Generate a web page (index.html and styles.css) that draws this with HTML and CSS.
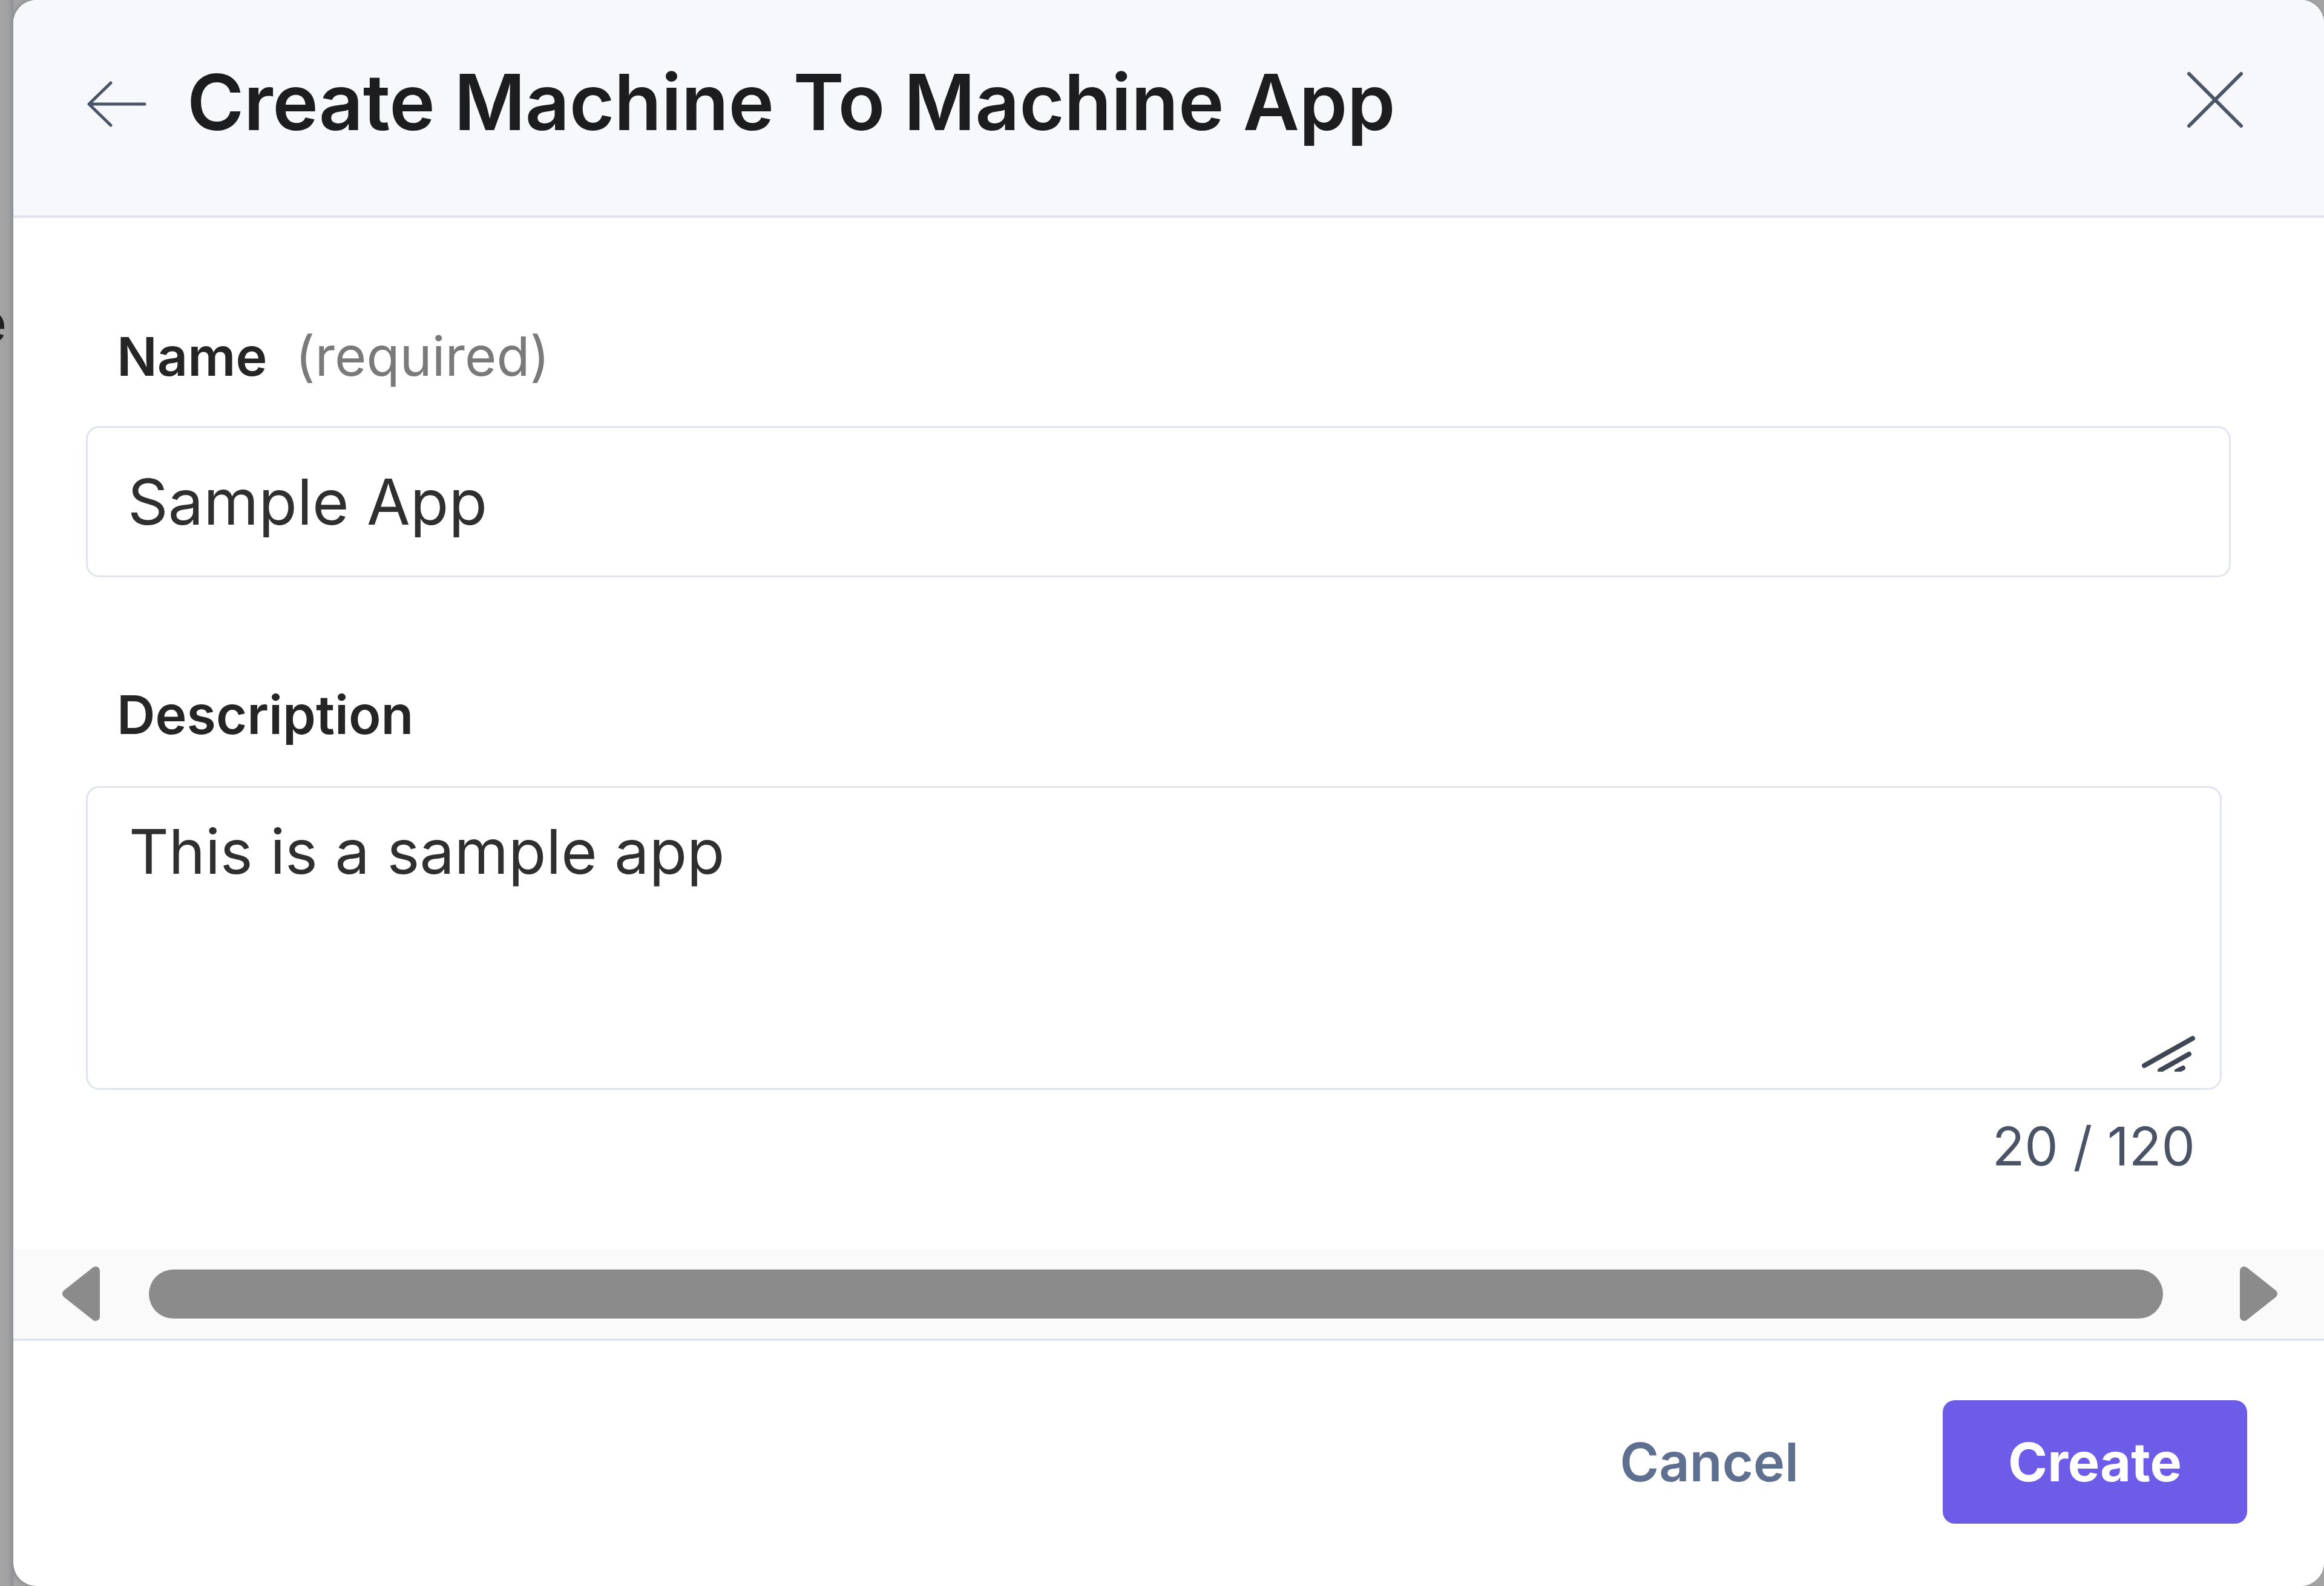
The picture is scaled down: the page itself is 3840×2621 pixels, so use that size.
FILE: index.html
```html
<!DOCTYPE html>
<html lang="en">
<head>
<meta charset="utf-8">
<title>Create Machine To Machine App</title>
<link rel="stylesheet" href="styles.css">
</head>
<body>
<div class="backdrop">
  <div class="strip"><span class="strip-e">e</span></div>
  <div class="dialog">
    <header class="dlg-header">
      <button class="icon-btn back" aria-label="Back">
        <svg viewBox="0 0 100 76" width="100" height="76"><path d="M97 38H5M41 3L5 38L41 73" fill="none" stroke="#4a5568" stroke-width="5" stroke-linecap="round" stroke-linejoin="round"/></svg>
      </button>
      <h1 class="title">Create Machine To Machine App</h1>
      <button class="icon-btn close" aria-label="Close">
        <svg viewBox="0 0 96 96" width="96" height="96"><path d="M5 5L91 91M91 5L5 91" fill="none" stroke="#4a5568" stroke-width="6" stroke-linecap="round"/></svg>
      </button>
    </header>

    <main class="dlg-body">
      <label class="field-label">Name <span class="hint">(required)</span></label>
      <div class="input">Sample App</div>

      <label class="field-label desc-label">Description</label>
      <div class="textarea-wrap">
        <textarea class="textarea">This is a sample app</textarea>
        <svg class="resizer" viewBox="0 0 90 64" width="90" height="64"><path d="M4 54L84 9M30 62L78 35M58 63L68 58" fill="none" stroke="#3f4654" stroke-width="8" stroke-linecap="round"/></svg>
      </div>
      <div class="counter">20 / 120</div>
    </main>

    <div class="hscroll">
      <svg class="arrow" viewBox="0 0 70 92" width="70" height="92"><path d="M58 8L10 46L58 84Z" fill="#8b8b8b" stroke="#8b8b8b" stroke-width="14" stroke-linejoin="round"/></svg>
      <div class="thumb"></div>
      <svg class="arrow arrow-r" viewBox="0 0 70 92" width="70" height="92"><path d="M12 8L60 46L12 84Z" fill="#8b8b8b" stroke="#8b8b8b" stroke-width="14" stroke-linejoin="round"/></svg>
    </div>

    <footer class="dlg-footer">
      <button class="btn btn-text">Cancel</button>
      <button class="btn btn-primary">Create</button>
    </footer>
  </div>
</div>
</body>
</html>
```

FILE: styles.css
```css
html, body {
  margin: 0;
  padding: 0;
  height: 100%;
  overflow: hidden;
}

body {
  background: #a3a3a3;
  font-family: Inter, "Noto Sans", "Liberation Sans", sans-serif;
}

.backdrop {
  display: flex;
  height: 2621px;
}

.strip {
  width: 22px;
  flex: none;
  position: relative;
  background: linear-gradient(to right, #a4a4a4 0, #a0a0a0 14px, #8f9096 22px);
  overflow: hidden;
}

.strip-e {
  position: absolute;
  left: -40px;
  top: 480px;
  font-size: 88px;
  color: #222;
}

.dialog {
  flex: 1;
  background: #ffffff;
  border-radius: 38px;
  overflow: hidden;
  display: flex;
  flex-direction: column;
  box-shadow: -3px 0 6px rgba(60, 60, 80, 0.25);
}

/* Header */
.dlg-header {
  height: 356px;
  flex: none;
  background: #f7f8fb;
  border-bottom: 4px solid #dde2ec;
  display: flex;
  align-items: center;
  padding: 0 132px 20px 120px;
  box-sizing: border-box;
  height: 360px;
}

.icon-btn {
  background: none;
  border: 0;
  padding: 0;
  display: flex;
  align-items: center;
  justify-content: center;
  cursor: pointer;
}

.back {
  margin-top: 8px;
}

.title {
  margin: 0 0 0 67px;
  font-size: 128px;
  font-weight: 600;
  color: #1d1d1f;
  letter-spacing: -0.5px;
  flex: 1;
  white-space: nowrap;
}

.close {
  margin-top: -6px;
}

/* Body */
.dlg-body {
  display: flex;
  flex-direction: column;
  padding: 0 154px 0 120px;
  height: 1704px;
  flex: none;
  box-sizing: border-box;
}

.field-label {
  margin-top: 176px;
  padding-left: 51px;
  font-size: 88px;
  line-height: 106px;
  font-weight: 600;
  color: #252525;
}

.hint {
  font-weight: 400;
  font-size: 90px;
  color: #7a7a7a;
  margin-left: 24px;
}

.desc-label {
  margin-top: 174px;
}

.input {
  margin-top: 62px;
  height: 250px;
  box-sizing: border-box;
  border: 3px solid #dfe4ee;
  border-radius: 22px;
  display: flex;
  align-items: center;
  padding-left: 66px;
  font-size: 104px;
  color: #2f2f2f;
}

.textarea-wrap {
  margin-top: 65px;
  position: relative;
  margin-right: 15px;
}

.textarea {
  display: block;
  width: 100%;
  height: 502px;
  box-sizing: border-box;
  border: 3px solid #dfe4ee;
  border-radius: 22px;
  padding: 40px 68px;
  font-family: Inter, "Noto Sans", "Liberation Sans", sans-serif;
  font-size: 102px;
  line-height: 130px;
  color: #2f2f2f;
  resize: none;
  outline: none;
  background: #fff;
}

.resizer {
  position: absolute;
  right: 42px;
  bottom: 30px;
}

.counter {
  margin-top: 40px;
  margin-right: 59px;
  text-align: right;
  font-size: 88px;
  line-height: 106px;
  color: #4a5466;
}

/* Horizontal scroll bar */
.hscroll {
  flex: none;
  height: 152px;
  box-sizing: border-box;
  background: #fafafa;
  border-bottom: 4px solid #dfe4ee;
  display: flex;
  align-items: center;
  padding: 0 74px 0 78px;
  gap: 76px;
}

.arrow {
  flex: none;
}

.arrow-r {
  margin-left: 46px;
}

.thumb {
  flex: 1;
  height: 81px;
  border-radius: 41px;
  background: #8b8b8b;
}

/* Footer */
.dlg-footer {
  flex: 1;
  display: flex;
  justify-content: flex-end;
  align-items: center;
  padding: 0 127px 6px 0;
  gap: 130px;
}

.btn {
  font-family: Inter, "Noto Sans", "Liberation Sans", sans-serif;
  font-size: 88px;
  font-weight: 600;
  border: 0;
  height: 204px;
  padding: 0 108px;
  border-radius: 20px;
  cursor: pointer;
}

.btn-text {
  background: transparent;
  color: #5f6f8f;
}

.btn-primary {
  background: #6c5ce7;
  color: #ffffff;
  font-weight: 700;
}
```
